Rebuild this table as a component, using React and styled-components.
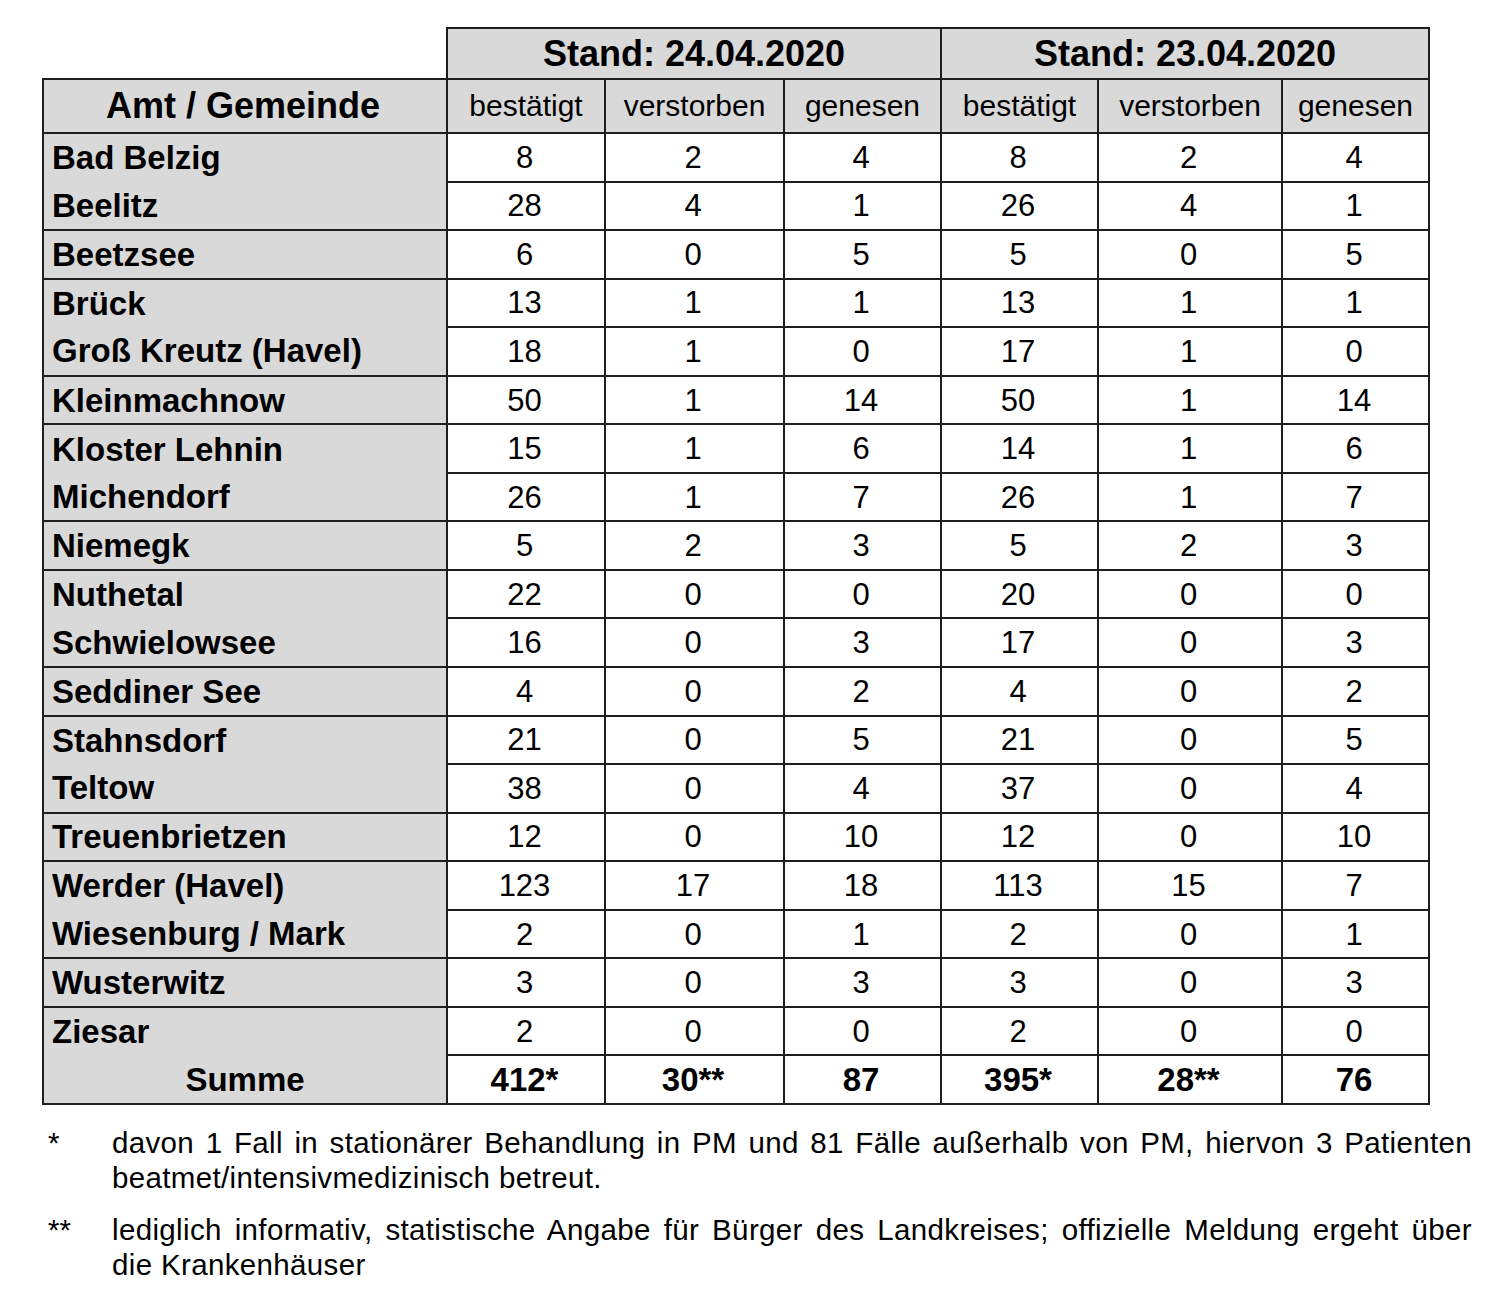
import React from "react";
import styled, { createGlobalStyle } from "styled-components";

const Global = createGlobalStyle`
  html, body { margin: 0; padding: 0; background: #fff; }
  body { font-family: "Liberation Sans", Arial, Helvetica, sans-serif; color: #000; }
`;

const Page = styled.div`
  width: 1500px;
  padding: 27px 0 0 42px;
  box-sizing: border-box;
`;

const Table = styled.table`
  border-collapse: collapse;
  table-layout: fixed;
  width: 1386px;
`;

const Line = "2px solid #1e1e1e";

const Blank = styled.td`
  border: none;
  padding: 0;
`;

const HeadRow = styled.tr`
  height: ${(p) => p.$h}px;
`;

const DateHead = styled.th`
  border: ${Line};
  background: #d9d9d9;
  font-size: 36px;
  font-weight: 700;
  text-align: center;
  padding: 0;
  line-height: 1;
`;

const ColHead = styled.th`
  border: ${Line};
  background: #d9d9d9;
  font-size: 30px;
  font-weight: 400;
  text-align: center;
  padding: 0;
  line-height: 1;
`;

const AmtHead = styled.th`
  border: ${Line};
  background: #d9d9d9;
  font-size: 36px;
  font-weight: 700;
  text-align: center;
  padding: 0 4px 0 0;
  line-height: 1;
`;

const Row = styled.tr`
  height: 48.55px;
`;

const Name = styled.td`
  border: ${Line};
  ${(p) => (p.$open ? "border-bottom: none;" : "")}
  ${(p) => (p.$cont ? "border-top: none;" : "")}
  background: #d9d9d9;
  font-size: 33px;
  font-weight: 700;
  text-align: ${(p) => (p.$center ? "center" : "left")};
  padding: ${(p) => (p.$center ? "0" : "0 0 0 8px")};
  line-height: 1;
  white-space: nowrap;
`;

const Num = styled.td`
  border: ${Line};
  background: #fff;
  font-size: ${(p) => (p.$bold ? 33 : 31)}px;
  font-weight: ${(p) => (p.$bold ? 700 : 400)};
  text-align: center;
  padding: 0 3px 0 0;
  line-height: 1;
`;

const Notes = styled.div`
  width: 1430px;
  margin-top: 20px;
  display: flex;
  flex-direction: column;
  gap: 17px;
`;

const Note = styled.div`
  display: grid;
  grid-template-columns: 70px 1360px;
  font-size: 29.5px;
  line-height: 35px;
`;

const Mark = styled.div`
  padding-left: 6px;
`;

const NoteText = styled.div`
  text-align: justify;
  letter-spacing: 0.35px;
`;

const Keep = styled.span`
  white-space: nowrap;
`;

const data = [
  ["Bad Belzig", ["8", "2", "4", "8", "2", "4"], "open"],
  ["Beelitz", ["28", "4", "1", "26", "4", "1"], "cont"],
  ["Beetzsee", ["6", "0", "5", "5", "0", "5"]],
  ["Brück", ["13", "1", "1", "13", "1", "1"], "open"],
  ["Groß Kreutz (Havel)", ["18", "1", "0", "17", "1", "0"], "cont"],
  ["Kleinmachnow", ["50", "1", "14", "50", "1", "14"]],
  ["Kloster Lehnin", ["15", "1", "6", "14", "1", "6"], "open"],
  ["Michendorf", ["26", "1", "7", "26", "1", "7"], "cont"],
  ["Niemegk", ["5", "2", "3", "5", "2", "3"]],
  ["Nuthetal", ["22", "0", "0", "20", "0", "0"], "open"],
  ["Schwielowsee", ["16", "0", "3", "17", "0", "3"], "cont"],
  ["Seddiner See", ["4", "0", "2", "4", "0", "2"]],
  ["Stahnsdorf", ["21", "0", "5", "21", "0", "5"], "open"],
  ["Teltow", ["38", "0", "4", "37", "0", "4"], "cont"],
  ["Treuenbrietzen", ["12", "0", "10", "12", "0", "10"]],
  ["Werder (Havel)", ["123", "17", "18", "113", "15", "7"], "open"],
  ["Wiesenburg / Mark", ["2", "0", "1", "2", "0", "1"], "cont"],
  ["Wusterwitz", ["3", "0", "3", "3", "0", "3"]],
  ["Ziesar", ["2", "0", "0", "2", "0", "0"], "open"],
];

const sums = ["412*", "30**", "87", "395*", "28**", "76"];
const cols = ["bestätigt", "verstorben", "genesen", "bestätigt", "verstorben", "genesen"];
const widths = [404, 158, 179, 157, 157, 184, 147];

export default function App() {
  return (
    <Page>
      <Global />
      <Table>
        <colgroup>
          {widths.map((w, i) => (
            <col key={i} style={{ width: w }} />
          ))}
        </colgroup>
        <thead>
          <HeadRow $h={51}>
            <Blank />
            <DateHead colSpan={3}>Stand: 24.04.2020</DateHead>
            <DateHead colSpan={3}>Stand: 23.04.2020</DateHead>
          </HeadRow>
          <HeadRow $h={54}>
            <AmtHead>Amt / Gemeinde</AmtHead>
            {cols.map((c, i) => (
              <ColHead key={i}>{c}</ColHead>
            ))}
          </HeadRow>
        </thead>
        <tbody>
          {data.map(([name, vals, join]) => (
            <Row key={name}>
              <Name $open={join === "open"} $cont={join === "cont"}>
                {name}
              </Name>
              {vals.map((v, i) => (
                <Num key={i}>{v}</Num>
              ))}
            </Row>
          ))}
          <Row>
            <Name $cont $center>
              Summe
            </Name>
            {sums.map((v, i) => (
              <Num key={i} $bold>
                {v}
              </Num>
            ))}
          </Row>
        </tbody>
      </Table>
      <Notes>
        <Note>
          <Mark>*</Mark>
          <NoteText>
            davon 1 Fall in stationärer Behandlung in PM und 81 Fälle außerhalb von PM, hiervon 3 Patienten
            beatmet/intensivmedizinisch betreut.
          </NoteText>
        </Note>
        <Note>
          <Mark>**</Mark>
          <NoteText>
            lediglich informativ, statistische Angabe für Bürger des Landkreises; offizielle Meldung ergeht über{" "}
            <Keep>die Krankenhäuser</Keep>
          </NoteText>
        </Note>
      </Notes>
    </Page>
  );
}
